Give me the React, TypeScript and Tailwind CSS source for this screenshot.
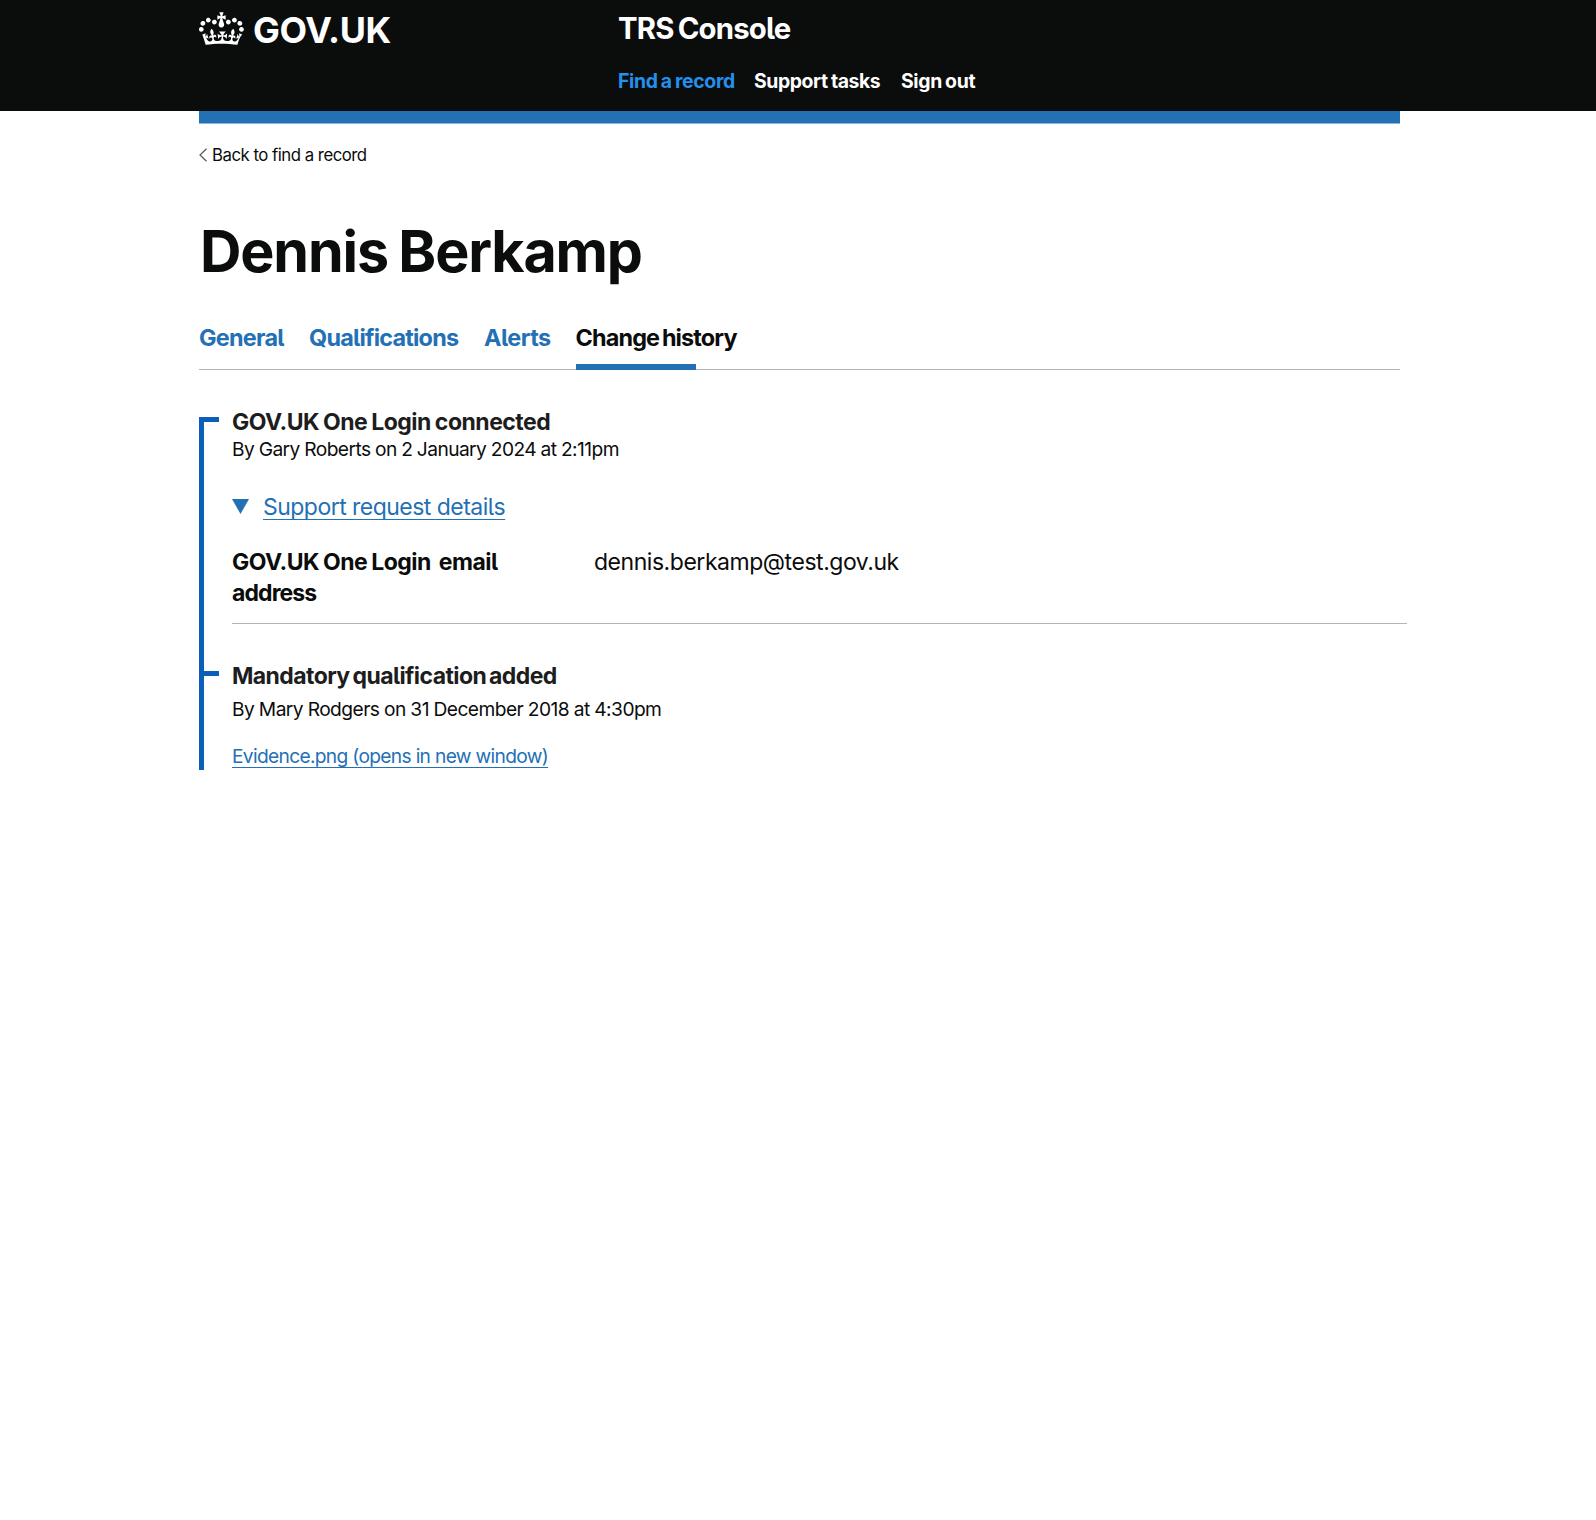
import type { ReactNode } from "react";

function Crown() {
  return (
    <svg className="mt-3 h-[33px] w-[45px] shrink-0" viewBox="0 4 35.8 26.1" preserveAspectRatio="none" fill="#fff" aria-hidden="true">
      <path d="M6.7 12.2c1 .4 2.1-.1 2.5-1s-.1-2.1-1-2.5c-1-.4-2.1.1-2.5 1-.4 1 0 2.1 1 2.5m-4.3 2.5c1 .4 2.1-.1 2.5-1s-.1-2.1-1-2.5c-1-.4-2.1.1-2.5 1-.5 1 0 2.1 1 2.5m-1.3 4.8c1 .4 2.1-.1 2.5-1 .4-1-.1-2.1-1-2.5-1-.4-2.1.1-2.5 1-.4 1 0 2.1 1 2.5m10.4-5.8c1 .4 2.1-.1 2.5-1s-.1-2.1-1-2.5c-1-.4-2.1.1-2.5 1s0 2.1 1 2.5m17.4-1.5c-1 .4-2.1-.1-2.5-1s.1-2.1 1-2.5c1-.4 2.1.1 2.5 1 .5 1 0 2.1-1 2.5m4.3 2.5c-1 .4-2.1-.1-2.5-1s.1-2.1 1-2.5c1-.4 2.1.1 2.5 1 .5 1 0 2.1-1 2.5m1.3 4.8c-1 .4-2.1-.1-2.5-1-.4-1 .1-2.1 1-2.5 1-.4 2.1.1 2.5 1 .4 1 0 2.1-1 2.5m-10.4-5.8c-1 .4-2.1-.1-2.5-1s.1-2.1 1-2.5c1-.4 2.1.1 2.5 1s0 2.1-1 2.5m-5.3-4.8 2.4 1.3V6.5l-2.4.8c-.1-.1-.1-.2-.2-.2s1-3 1-3h-3.4l1 3c-.1.1-.2.1-.2.2-.1.1-2.4-.7-2.4-.7v3.5L17 8.800c-.1.1 0 .2.1.3l-1.400 4.200c-.1.2-.1.4-.1.7 0 1.1.8 2.1 1.9 2.200h.6C19.200 16 20 15.100 20 14c0-.2 0-.4-.1-.7l-1.400-4.200c.2-.1.3-.2.3-.3m-1 20.300c4.600 0 8.900.3 12.800.9 1.100-4.600 2.400-6.800 3.800-8.300l-2.500-.9c.1 1.300.3 1.900 0 2.700-.4-.4-.8-1.100-1.100-2.300l-1.200 4c.7-.5 1.300-.8 2-.9-1.100 2.500-2.600 3.100-3.500 3-1.100-.2-1.700-1.200-1.500-2.100.3-1.200 1.500-1.500 2.100-.1 1.100-2.300-.8-3-2-2.300 1.900-1.900 2.100-3.500.6-5.600-2.100 1.600-2.100 3.200-1.200 5.500-1.200-1.400-3.200-.6-2.500 1.600.9-1.400 2.100-.5 1.900.8-.2 1.100-1.700 2.100-3.500 1.900-2.700-.2-2.900-2.100-2.900-3.600.7-.1 1.900.5 2.900 1.900l.4-4.300c-1.100 1.100-2.100 1.400-3.200 1.400.4-1.200 2.100-3 2.100-3h-5.400s1.700 1.900 2.100 3c-1.100 0-2.100-.2-3.200-1.400l.4 4.300c1-1.400 2.200-2 2.900-1.900-.1 1.500-.2 3.400-2.900 3.600-1.900.2-3.400-.8-3.500-1.900-.2-1.300 1-2.200 1.900-.8.7-2.300-1.200-3-2.500-1.600.9-2.200.9-3.900-1.200-5.500-1.500 2-1.300 3.700.6 5.600-1.200-.7-3.100 0-2 2.300.6-1.400 1.800-1.100 2.100.1.2.9-.3 1.900-1.500 2.100-.9.2-2.400-.5-3.500-3 .6 0 1.200.3 2 .9l-1.200-4c-.3 1.100-.7 1.900-1.100 2.300-.3-.8-.2-1.400 0-2.700l-2.600.9C2.900 23.200 4.200 25.400 5.300 30c3.800-.6 8-.9 12.500-.9z" />
    </svg>
  );
}

// One entry of the change history: a short tick on the rail, then the entry's text.
function TimelineItem({ children }: { children: ReactNode }) {
  return (
    <li className="flex items-start">
      <span className="h-[5px] w-[15px] shrink-0 bg-[#0b5fb8]" />
      <div className="-mt-[7px] ml-[13px] w-[1175px] shrink-0">{children}</div>
    </li>
  );
}

export default function App() {
  return (
    <div className="min-h-[1520px] overflow-hidden bg-white font-['Inter',sans-serif] text-[#0b0c0c] [font-feature-settings:'cv05']">
      <header className="h-[111px] bg-[#0b0c0c] text-white">
        <div className="ml-[199px] flex w-[1201px]">
          <a className="flex w-[419px] shrink-0">
            <Crown />
            <span className="ml-[9px] mt-[10px] h-10 text-[35.8px] font-bold leading-10 tracking-[-0.4px]">GOV.UK</span>
          </a>
          <div>
            <div className="mt-[11px] h-9 text-[29.3px] font-bold leading-9 tracking-[-0.8px] [word-spacing:-2px]">TRS Console</div>
            <nav className="mt-[22px] flex h-6 whitespace-nowrap text-[19.4px] font-bold leading-6 [word-spacing:-1px]">
              <a className="w-[136px] tracking-[-0.34px] text-[#2490eb]">Find a record</a>
              <a className="w-[147px] tracking-[-0.4px]">Support tasks</a>
              <a className="tracking-[-0.35px]">Sign out</a>
            </nav>
          </div>
        </div>
      </header>
      <main className="ml-[199px] w-[1201px]">
        <div className="h-[13px] border-b border-[#8db6da] bg-[#2470b5]" />
        <a className="mt-[21px] flex h-5 items-center text-[16.8px] leading-5 tracking-[-0.5px]">
          <svg className="h-[14px] w-2 shrink-0" viewBox="0 0 8 14" fill="none" stroke="#505a5f" strokeWidth="1.2"><path d="M7.5 .7 1 7l6.500 6.300" /></svg>
          <span className="ml-[5px]">Back to find a record</span>
        </a>
        <h1 className="ml-px mt-[50px] h-[72px] text-[57.4px] font-bold leading-[72px] tracking-[-1.15px] [word-spacing:-2px]">Dennis Berkamp</h1>
        <nav className="mt-9 flex h-[47px] whitespace-nowrap border-b border-[#b1b4b6] text-[23.4px] font-bold leading-[30px] text-[#2470b5]">
          <a className="w-[110px] tracking-[-0.75px]">General</a>
          <a className="w-[175px] tracking-[-0.78px]">Qualifications</a>
          <a className="w-[91.5px] tracking-[-0.5px]">Alerts</a>
          <a className="relative tracking-[-0.84px] text-[#0b0c0c] [word-spacing:-2px]">
            Change history
            <span className="absolute -bottom-px left-0 h-[6px] w-[120px] bg-[#2470b5]" />
          </a>
        </nav>
        <ol className="mt-[47px] border-l-[5px] border-[#0b5fb8] pb-[2px]">
          <TimelineItem>
            <h2 className="h-6 text-[23px] font-bold leading-6 tracking-[-0.5px] text-[#1d1d1d] [word-spacing:-1px]">GOV.UK One Login connected</h2>
            <p className="mt-[3px] h-6 text-[19.2px] leading-6 tracking-[-0.58px] [word-spacing:-0.3px]">By Gary Roberts on 2 January 2024 at 2:11pm</p>
            <div className="mt-[31px] flex h-[30px] text-[23px] leading-[30px] text-[#2470b5]">
              <svg className="mt-[7px] h-[15px] w-[17px]" viewBox="0 0 17 15" fill="#2470b5"><path d="M0 0h17L8.5 15z" /></svg>
              <span className="ml-[14px] tracking-[-0.53px] underline decoration-1 underline-offset-[4px] [text-decoration-skip-ink:none]">Support request details</span>
            </div>
            <dl className="mt-[25px] flex h-[77px] border-b border-[#b1b4b6] text-[23px] leading-[31px]">
              <dt className="w-[362px] font-bold tracking-[-0.5px] [word-spacing:-1px]">GOV.UK One Login&nbsp; email <span className="block tracking-[-0.9px]">address</span></dt>
              <dd className="tracking-[-0.46px]">dennis.berkamp@test.gov.uk</dd>
            </dl>
          </TimelineItem>
          <li className="h-[47px]" aria-hidden="true" />
          <TimelineItem>
            <h2 className="h-6 text-[23px] font-bold leading-6 tracking-[-0.58px] text-[#1d1d1d] [word-spacing:-2px]">Mandatory qualification added</h2>
            <p className="mt-[9px] h-6 text-[19.2px] leading-6 tracking-[-0.56px] [word-spacing:-0.2px]">By Mary Rodgers on 31 December 2018 at 4:30pm</p>
            <a className="mt-[23px] block h-6 w-fit text-[19.2px] leading-6 tracking-[-0.68px] text-[#2470b5] underline decoration-1 underline-offset-[4px] [text-decoration-skip-ink:none]">Evidence.png (opens in new window)</a>
          </TimelineItem>
        </ol>
      </main>
    </div>
  );
}
